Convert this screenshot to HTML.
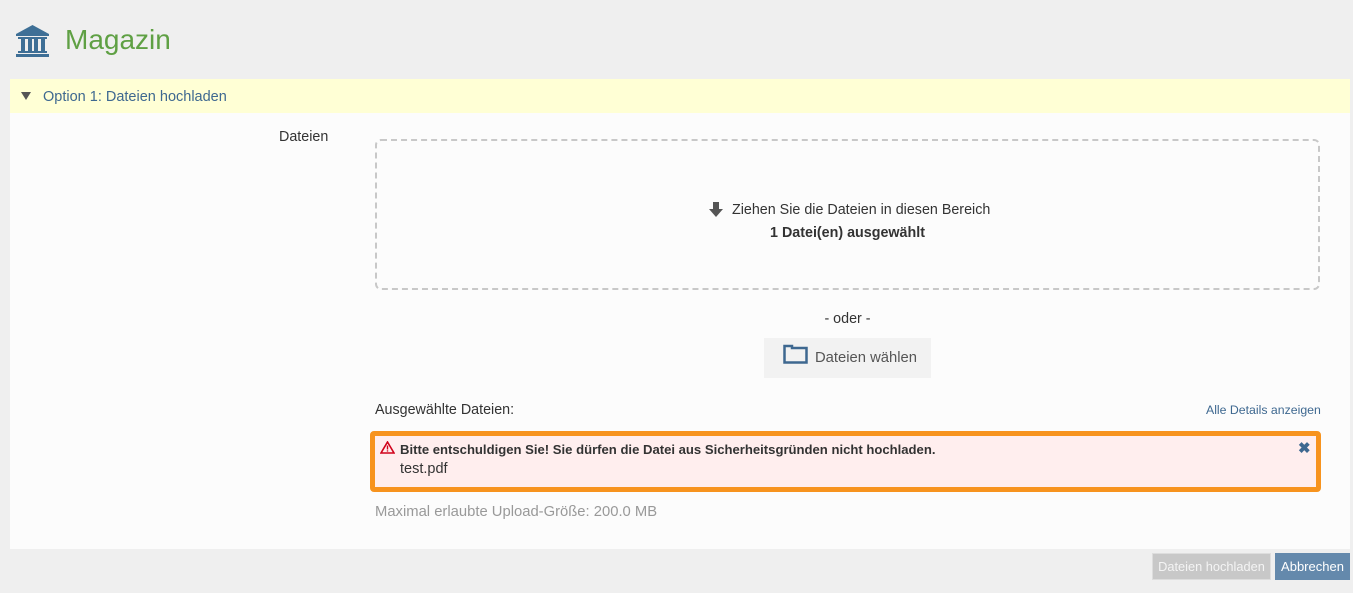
<!DOCTYPE html>
<html><head><meta charset="utf-8"><style>
*{box-sizing:border-box;margin:0;padding:0}
body{width:1353px;height:593px;background:#efefef;font-family:"Liberation Sans",sans-serif;font-size:14.3px;color:#333;position:relative;overflow:hidden}
.a{position:absolute}
</style></head><body>
<svg class="a" style="left:15px;top:25px" width="35" height="33" viewBox="0 0 35 33">
<path d="M17.5 0 L34 9 L34 11 L1 11 L1 9 Z" fill="#3e6f96"/>
<rect x="3" y="12" width="29" height="2" fill="#3e6f96"/>
<rect x="6" y="14" width="4" height="12" fill="#3e6f96"/>
<rect x="13" y="14" width="4" height="12" fill="#3e6f96"/>
<rect x="19" y="14" width="4" height="12" fill="#3e6f96"/>
<rect x="26" y="14" width="4" height="12" fill="#3e6f96"/>
<rect x="3" y="26" width="29" height="2" fill="#3e6f96"/>
<rect x="1" y="29" width="33" height="3" fill="#3e6f96"/>
</svg>
<div class="a" style="left:65px;top:24px;font-size:28px;color:#5fa044">Magazin</div>
<div class="a" style="left:10px;top:79px;width:1340px;height:470px;background:#fcfcfc"></div>
<div class="a" style="left:10px;top:79px;width:1340px;height:34px;background:#ffffd5"></div>
<div class="a" style="left:21px;top:92px;width:0;height:0;border-left:5px solid transparent;border-right:5px solid transparent;border-top:8px solid #555"></div>
<div class="a" style="left:43px;top:89px;color:#3e6890;font-size:14.5px">Option 1: Dateien hochladen</div>
<div class="a" style="left:279px;top:129px">Dateien</div>
<div class="a" style="left:375px;top:139px;width:945px;height:151px;border:2px dashed #c8c8c8;border-radius:6px"></div>
<svg class="a" style="left:709px;top:202px" width="14" height="16" viewBox="0 0 14 16"><rect x="4" y="0" width="6" height="8" fill="#555"/><path d="M0 7 L14 7 L7 15 Z" fill="#555"/></svg>
<div class="a" style="left:732px;top:202px">Ziehen Sie die Dateien in diesen Bereich</div>
<div class="a" style="left:375px;top:225px;width:945px;text-align:center;font-weight:bold">1 Datei(en) ausgewählt</div>
<div class="a" style="left:375px;top:311px;width:945px;text-align:center">- oder -</div>
<div class="a" style="left:764px;top:338px;width:167px;height:40px;background:#f2f2f2"></div>
<svg class="a" style="left:783px;top:344px" width="25" height="20" viewBox="0 0 25 20"><path d="M1.5 2 L9 2 L9 4 L23.5 4 L23.5 18.5 L1.5 18.5 Z" fill="none" stroke="#3e6890" stroke-width="2.5"/></svg>
<div class="a" style="left:815px;top:350px;color:#555;font-size:14.8px">Dateien wählen</div>
<div class="a" style="left:375px;top:402px">Ausgewählte Dateien:</div>
<div class="a" style="left:1206px;top:403px;color:#3e6890;font-size:12.3px">Alle Details anzeigen</div>
<div class="a" style="left:370px;top:431px;width:951px;height:61px;border:5px solid #f7931e;border-radius:4px;background:#ffeeee"></div>
<svg class="a" style="left:380px;top:441px" width="15" height="13" viewBox="0 0 15 13"><path d="M7.5 1 L14 12 L1 12 Z" fill="none" stroke="#d0021b" stroke-width="1.6"/><rect x="6.8" y="4.5" width="1.4" height="4" fill="#d0021b"/><rect x="6.8" y="9.3" width="1.4" height="1.3" fill="#d0021b"/></svg>
<div class="a" style="left:400px;top:442px;font-weight:bold;font-size:13.1px">Bitte entschuldigen Sie! Sie dürfen die Datei aus Sicherheitsgründen nicht hochladen.</div>
<div class="a" style="left:400px;top:461px;font-size:14.5px">test.pdf</div>
<div class="a" style="left:1298px;top:439px;color:#3e6890;font-weight:bold;font-size:15px">✖</div>
<div class="a" style="left:375px;top:504px;color:#999;font-size:14.8px">Maximal erlaubte Upload-Größe: 200.0 MB</div>
<div class="a" style="left:1152px;top:553px;width:119px;height:27px;background:#c8c8c8;border:1px solid #ddd;color:#f4f4f4;font-size:12.8px;line-height:25px;text-align:center">Dateien hochladen</div>
<div class="a" style="left:1275px;top:553px;width:75px;height:27px;background:#6489ac;color:#fff;font-size:13px;line-height:27px;text-align:center">Abbrechen</div>
</body></html>
